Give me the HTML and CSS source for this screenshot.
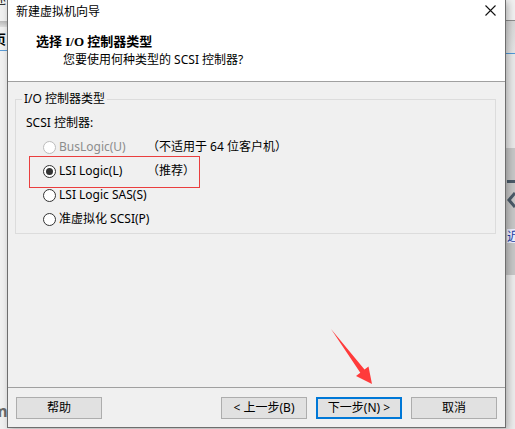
FILE: index.html
```html
<!DOCTYPE html>
<html lang="zh-CN">
<head>
<meta charset="utf-8">
<title>新建虚拟机向导</title>
<link rel="stylesheet" href="styles.css">
</head>
<body>
<div class="desktop">
  <div class="bg-left">
    <span class="bgl-char1">述</span>
    <div class="bgl-band"></div>
    <span class="bgl-char2">页</span>
    <div class="bgl-blue"></div>
    <span class="bgl-char3">m</span>
  </div>
  <div class="bg-right">
    <div class="bgr-top"></div>
    <div class="bgr-band"></div>
    <div class="bgr-blue"></div>
    <div class="bgr-mid"></div>
    <div class="bgr-dark">
      <div class="bgr-dash"></div>
      <svg class="bgr-chev" width="9" height="16" viewBox="0 0 9 16"><path d="M8 1 L2 8 L8 15" fill="none" stroke="#4b5a68" stroke-width="3"/></svg>
      <span class="bgr-char">近</span>
    </div>
  </div>

  <div class="dialog">
    <div class="titlebar">
      <span class="title">新建虚拟机向导</span>
      <svg class="close" width="11" height="11" viewBox="0 0 11 11"><path d="M0.5 0.5 L10.5 10.5 M10.5 0.5 L0.5 10.5" stroke="#111" stroke-width="1.1" fill="none"/></svg>
    </div>
    <div class="header">
      <div class="h-title">选择 I/O 控制器类型</div>
      <div class="h-sub">您要使用何种类型的 SCSI 控制器?</div>
    </div>
    <div class="content">
      <fieldset class="group">
        <legend>I/O 控制器类型</legend>
        <div class="group-inner">
          <div class="sublabel">SCSI 控制器:</div>
          <div class="radio-row disabled">
            <span class="radio"></span>
            <span class="lbl">BusLogic(U)</span>
            <span class="note">（不适用于 64 位客户机）</span>
          </div>
          <div class="radio-row">
            <span class="radio checked"></span>
            <span class="lbl">LSI Logic(L)</span>
            <span class="note">（推荐）</span>
          </div>
          <div class="radio-row">
            <span class="radio"></span>
            <span class="lbl">LSI Logic SAS(S)</span>
          </div>
          <div class="radio-row">
            <span class="radio"></span>
            <span class="lbl">准虚拟化 SCSI(P)</span>
          </div>
        </div>
      </fieldset>
    </div>
    <div class="footer">
      <button class="btn">帮助</button>
      <div class="nav">
        <button class="btn">&lt; 上一步(B)</button>
        <button class="btn default">下一步(N) &gt;</button>
        <button class="btn">取消</button>
      </div>
    </div>
  </div>

  <div class="highlight"></div>
  <svg class="arrow" width="515" height="429" viewBox="0 0 515 429">
    <polygon points="331,329 364.5,369.5 368.5,366.5 372,384 356,376 360.3,372.7" fill="#ff3b3b"/>
  </svg>
</div>
</body>
</html>
```

FILE: styles.css
```css
* { box-sizing: border-box; }
html, body { margin: 0; padding: 0; }
body {
  font-family: "Noto Sans", "Noto Sans CJK SC", sans-serif;
  font-size: 12px;
  color: #000;
  background: #f0f0f0;
}
.desktop {
  position: relative;
  width: 515px;
  height: 429px;
  overflow: hidden;
  background: #f0f0f0;
}

/* background window fragments */
.bg-left {
  position: absolute;
  left: 0; top: 0;
  width: 8px; height: 429px;
  background: #f0f0f0;
  overflow: hidden;
}
.bgl-char1 {
  position: absolute; left: -6px; top: -8px;
  font-family: "Noto Sans CJK SC", sans-serif; font-size: 12px; line-height: 14px;
}
.bgl-band {
  position: absolute; left: 0; top: 21px; width: 8px; height: 6px;
  background: linear-gradient(#b9b9b9, #dedede);
}
.bgl-char2 {
  position: absolute; left: -7px; top: 32px;
  font-family: "Noto Sans CJK SC", sans-serif; font-weight: bold; font-size: 13px; line-height: 14px;
}
.bgl-blue {
  position: absolute; left: 0; top: 50px; width: 8px; height: 1px; background: #5a9bd5;
}
.bgl-char3 {
  position: absolute; left: -8px; top: 402px;
  font-family: "Noto Sans", sans-serif; font-weight: bold; font-size: 16px; line-height: 18px; color: #6a6a6a;
}
.bg-right {
  position: absolute;
  left: 505px; top: 0;
  width: 10px; height: 429px;
  display: flex; flex-direction: column;
  background: #ebebeb;
}
.bgr-top { height: 21px; background: #f0f0f0; border-bottom: 1px solid #8c8c8c; }
.bgr-band { height: 32px; background: linear-gradient(#d6d6d6, #e4e4e4); }
.bgr-blue { height: 1px; background: #4f98d8; }
.bgr-mid { height: 94px; background: #e8e8e8; }
.bgr-dark {
  position: relative;
  height: 127px;
  background: #c6c6c6;
}
.bgr-dash { position: absolute; left: 2px; top: 32px; width: 8px; height: 3px; background: #4b5a68; }
.bgr-chev { position: absolute; left: 2px; top: 44px; }
.bgr-char {
  position: absolute; left: 2px; top: 81px;
  font-family: "Noto Sans CJK SC", sans-serif; font-size: 12px; line-height: 14px; color: #1b3fa8;
  background: #eef0ff;
}

/* dialog window */
.dialog {
  position: absolute;
  left: 7px; top: 0;
  width: 499px; height: 428px;
  border: 1px solid #6e6e6e;
  border-top: none;
  background: #f0f0f0;
  display: flex;
  flex-direction: column;
  box-shadow: 2px 2px 7px rgba(0, 0, 0, 0.28);
}
.titlebar {
  height: 24px;
  background: #fff;
  display: flex;
  justify-content: space-between;
  align-items: center;
  padding: 0 9px 0 8px;
}
.title { line-height: 16px; }
.close { align-self: flex-start; margin-top: 5px; }
.header {
  background: #fff;
  padding: 10px 0 13px 28px;
  border-bottom: 1px solid #a0a0a0;
}
.h-title {
  font-family: "Liberation Serif", "Noto Sans CJK SC", serif;
  font-weight: bold;
  font-size: 13px;
  line-height: 16px;
}
.h-sub {
  margin-top: 2px;
  padding-left: 27px;
  line-height: 16px;
}
.content {
  flex: 1;
  padding: 9px 9px 0 7px;
}
.group {
  margin: 0;
  padding: 0 0 2px 0;
  min-width: 0;
  border: 1px solid #dcdcdc;
}
.group legend {
  margin-left: 6px;
  padding: 0 2px;
  line-height: 16px;
}
.group-inner {
  padding: 4px 0 0 10px;
}
.sublabel {
  height: 24px;
  line-height: 24px;
}
.radio-row {
  height: 24px;
  display: flex;
  align-items: center;
  padding-left: 17px;
}
.radio {
  width: 13px; height: 13px;
  border: 1px solid #333;
  border-radius: 50%;
  background: #fff;
  display: flex;
  align-items: center;
  justify-content: center;
  flex: none;
}
.radio.checked::after {
  content: "";
  width: 7px; height: 7px;
  border-radius: 50%;
  background: #333;
}
.lbl {
  margin-left: 3px;
  width: 88px;
  white-space: nowrap;
  line-height: 16px;
}
.note { white-space: nowrap; line-height: 16px; }
.disabled .radio { border-color: #bcbcbc; }
.disabled .lbl { color: #8c8c8c; }

.footer {
  border-top: 1px solid #a0a0a0;
  padding: 9px 8px 8px 8px;
  display: flex;
  justify-content: space-between;
}
.nav { display: flex; gap: 9px; }
.btn {
  width: 86px;
  height: 22px;
  margin: 0;
  padding: 0;
  font-family: "Noto Sans", "Noto Sans CJK SC", sans-serif;
  font-size: 12px;
  line-height: 18px;
  color: #000;
  background: #e1e1e1;
  border: 1px solid #adadad;
  border-radius: 0;
}
.btn.default { border: 2px solid #0078d7; }

/* annotations */
.highlight {
  position: absolute;
  left: 29px; top: 156px;
  width: 171px; height: 32px;
  border: 1px solid #ea3e3e;
}
.arrow {
  position: absolute;
  left: 0; top: 0;
  pointer-events: none;
}
```
